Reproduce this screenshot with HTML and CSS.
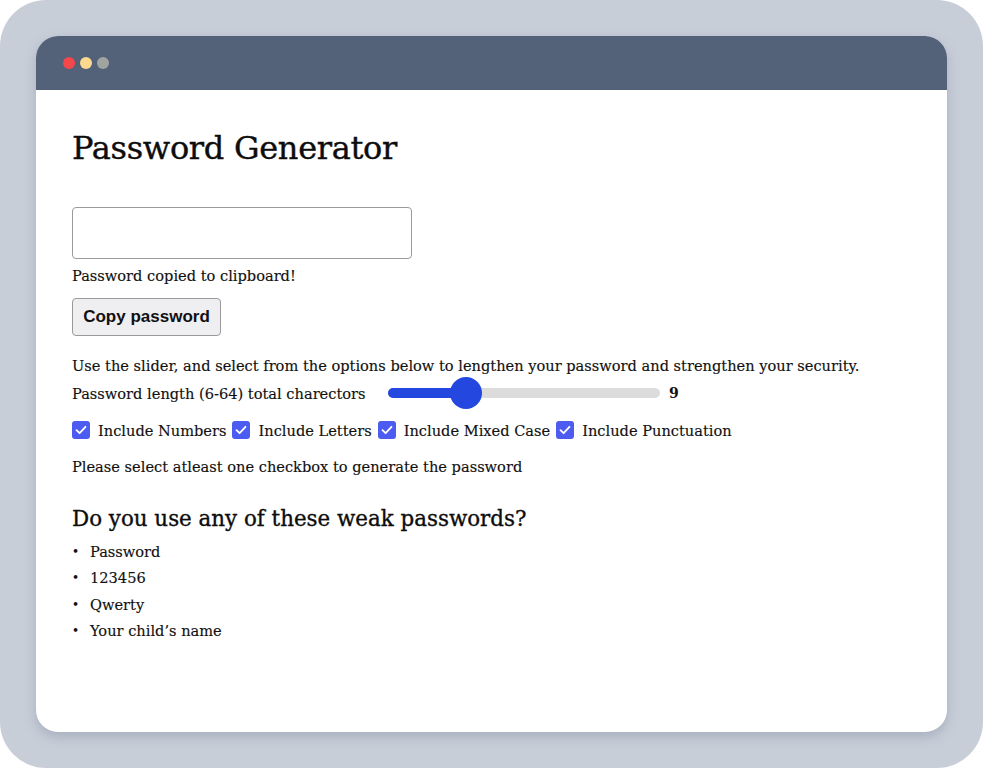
FILE: index.html
```html
<!DOCTYPE html>
<html lang="en">
<head>
<meta charset="utf-8">
<title>Password Generator</title>
<link rel="stylesheet" href="styles.css">
</head>
<body>
<div class="frame">
  <div class="window">
    <div class="titlebar">
      <span class="dot dot-red"></span>
      <span class="dot dot-yellow"></span>
      <span class="dot dot-gray"></span>
    </div>
    <main class="content">
      <h1 class="title">Password Generator</h1>
      <input class="pw-field" type="text" aria-label="Generated password">
      <p class="note">Password copied to clipboard!</p>
      <button class="copy-btn" type="button">Copy password</button>
      <p class="intro">Use the slider, and select from the options below to lengthen your password and strengthen your security.</p>
      <div class="length-row">
        <span class="length-label">Password length (6-64) total charectors</span>
        <div class="slider">
          <div class="slider-fill"></div>
          <div class="slider-thumb"></div>
        </div>
        <span class="length-value">9</span>
      </div>
      <div class="options">
        <label class="option"><span class="check"><svg viewBox="0 0 18 18" width="18" height="18"><path d="M4.5 9.2 L7.6 12.2 L13.5 5.8" fill="none" stroke="#fff" stroke-width="1.8" stroke-linecap="round" stroke-linejoin="round"/></svg></span>Include Numbers</label>
        <label class="option"><span class="check"><svg viewBox="0 0 18 18" width="18" height="18"><path d="M4.5 9.2 L7.6 12.2 L13.5 5.8" fill="none" stroke="#fff" stroke-width="1.8" stroke-linecap="round" stroke-linejoin="round"/></svg></span>Include Letters</label>
        <label class="option"><span class="check"><svg viewBox="0 0 18 18" width="18" height="18"><path d="M4.5 9.2 L7.6 12.2 L13.5 5.8" fill="none" stroke="#fff" stroke-width="1.8" stroke-linecap="round" stroke-linejoin="round"/></svg></span>Include Mixed Case</label>
        <label class="option"><span class="check"><svg viewBox="0 0 18 18" width="18" height="18"><path d="M4.5 9.2 L7.6 12.2 L13.5 5.8" fill="none" stroke="#fff" stroke-width="1.8" stroke-linecap="round" stroke-linejoin="round"/></svg></span>Include Punctuation</label>
      </div>
      <p class="warning">Please select atleast one checkbox to generate the password</p>
      <h2 class="subtitle">Do you use any of these weak passwords?</h2>
      <ul class="weak-list">
        <li>Password</li>
        <li>123456</li>
        <li>Qwerty</li>
        <li>Your child’s name</li>
      </ul>
    </main>
  </div>
</div>
</body>
</html>
```

FILE: styles.css
```css
* { box-sizing: border-box; }
html, body { margin: 0; padding: 0; background: #ffffff; }
body { width: 983px; height: 768px; overflow: hidden; }

.frame {
  width: 983px;
  height: 768px;
  background: #c8ced8;
  border-radius: 46px;
  padding: 36px;
}

.window {
  width: 911px;
  height: 696px;
  background: #ffffff;
  border-radius: 22px;
  overflow: hidden;
  box-shadow: 0 5px 12px rgba(120, 132, 155, 0.4);
  display: flex;
  flex-direction: column;
}

.titlebar {
  height: 54px;
  background: #536179;
  display: flex;
  align-items: center;
  gap: 5px;
  padding-left: 27px;
  flex-shrink: 0;
}
.dot { width: 12px; height: 12px; border-radius: 50%; display: block; }
.dot-red { background: #f4474b; }
.dot-yellow { background: #fcd98f; }
.dot-gray { background: #a0a49f; }

.content {
  padding: 36px 36px 0 36px;
  font-family: "DejaVu Serif", "Liberation Serif", serif;
  font-size: 14.6px;
  color: #111111;
  -webkit-text-stroke: 0.15px #111111;
  display: flex;
  flex-direction: column;
  align-items: flex-start;
}

.title {
  font-size: 32px;
  font-weight: 400;
  margin: 0;
  line-height: 44px;
  letter-spacing: -0.3px;
  color: #0d0d0d;
  -webkit-text-stroke: 0.4px #0d0d0d;
}

.pw-field {
  margin-top: 37px;
  width: 340px;
  height: 52px;
  border: 1px solid #9a9a9a;
  border-radius: 4px;
  background: #fff;
}

.note { margin: 6px 0 0 0; line-height: 22px; }

.copy-btn {
  margin-top: 11px;
  width: 149px;
  height: 38px;
  font-family: "Liberation Sans", Arial, sans-serif;
  font-size: 17px;
  font-weight: 700;
  color: #111;
  -webkit-text-stroke: 0;
  background: #efeff1;
  border: 1px solid #9a9a9a;
  border-radius: 4px;
  padding: 0;
}

.intro { margin: 19px 0 0 0; line-height: 22px; }

.length-row {
  display: flex;
  align-items: center;
  margin-top: 0;
  height: 32px;
}
.length-label { width: 316px; }
.slider {
  position: relative;
  width: 272px;
  height: 10px;
  border-radius: 5px;
  background: #dcdcdc;
}
.slider-fill {
  width: 78px;
  height: 10px;
  border-radius: 5px;
  background: #2447e0;
}
.slider-thumb {
  position: absolute;
  left: 62px;
  top: -11px;
  width: 32px;
  height: 32px;
  border-radius: 50%;
  background: #2447e0;
}
.length-value { margin-left: 9px; font-weight: 700; font-size: 14px; -webkit-text-stroke: 0; }

.options {
  display: flex;
  align-items: center;
  margin-top: 6px;
  height: 30px;
}
.option { display: flex; align-items: center; margin-right: 6px; }
.check {
  width: 18px;
  height: 18px;
  border-radius: 3px;
  background: #4c5cf0;
  display: inline-flex;
  margin-right: 8px;
}

.warning { margin: 11px 0 0 0; line-height: 22px; }

.subtitle {
  margin: 26px 0 0 0;
  font-size: 21.4px;
  font-weight: 400;
  line-height: 30px;
  color: #0d0d0d;
  -webkit-text-stroke: 0.35px #0d0d0d;
}

.weak-list {
  margin: 5px 0 0 0;
  padding-left: 18px;
  list-style: none;
}
.weak-list li {
  line-height: 26.3px;
  position: relative;
}
.weak-list li::before {
  content: "•";
  position: absolute;
  left: -18px;
  font-size: 12px;
}
```
